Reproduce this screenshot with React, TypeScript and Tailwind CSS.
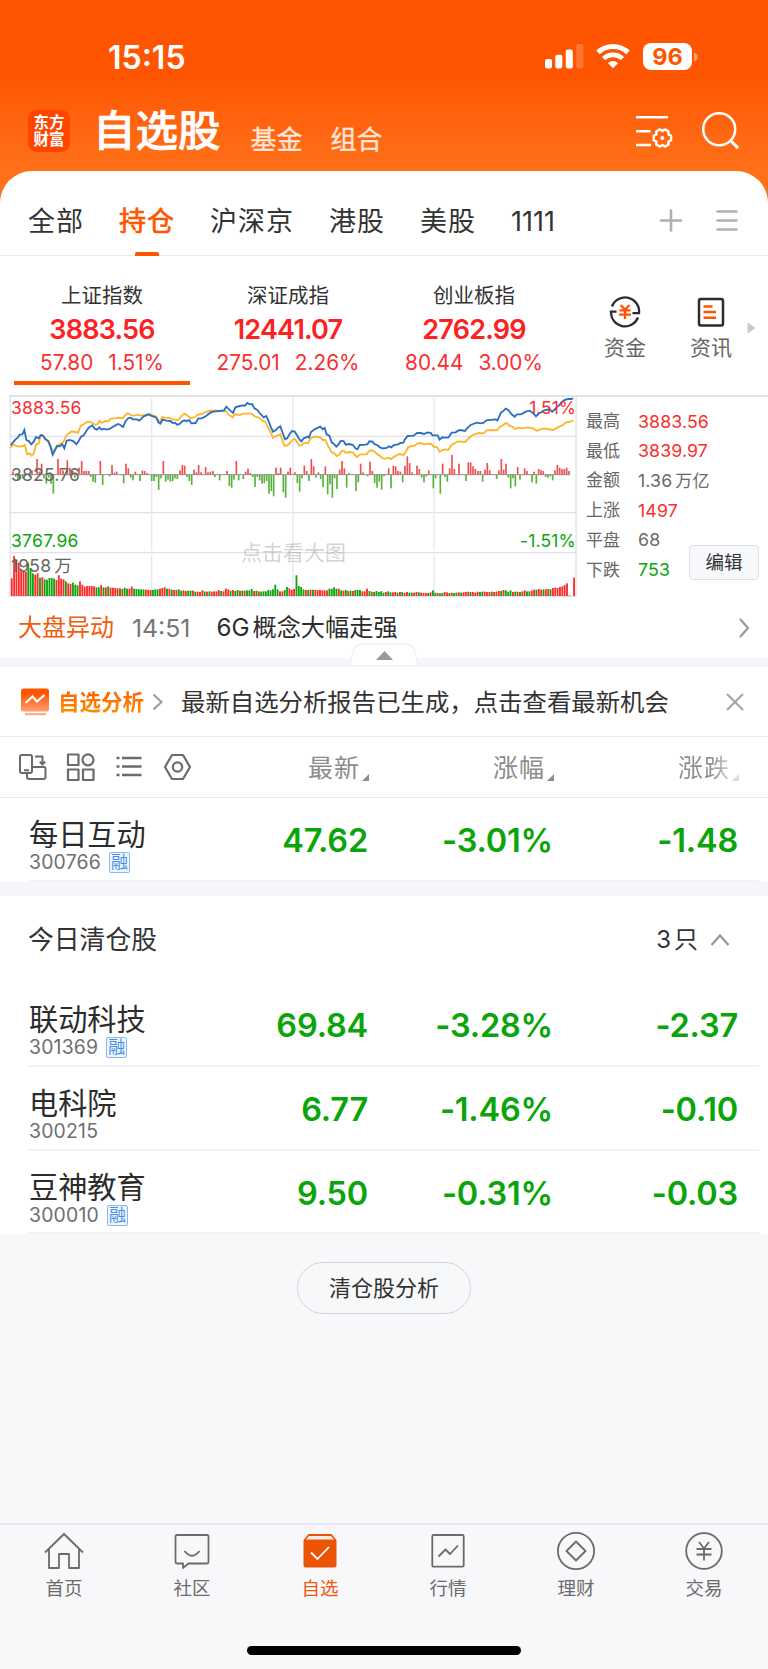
import type { ReactNode } from 'react';

const tabs = ['全部', '持仓', '沪深京', '港股', '美股', '1111'];

const indices = [
  { name: '上证指数', value: '3883.56', change: '57.80', percent: '1.51%' },
  { name: '深证成指', value: '12441.07', change: '275.01', percent: '2.26%' },
  { name: '创业板指', value: '2762.99', change: '80.44', percent: '3.00%' },
];

const stats = [
  { label: '最高', value: '3883.56', color: 'text-[#f92f2f]' },
  { label: '最低', value: '3839.97', color: 'text-[#f92f2f]' },
  { label: '金额', value: '1.36', unit: '万亿', color: 'text-[#6a6a6a]' },
  { label: '上涨', value: '1497', color: 'text-[#f92f2f]' },
  { label: '平盘', value: '68', color: 'text-[#6a6a6a]' },
  { label: '下跌', value: '753', color: 'text-[#0da50d]' },
];

type Stock = { name: string; code: string; margin: boolean; price: string; percent: string; change: string };

const holdings: Stock[] = [
  { name: '每日互动', code: '300766', margin: true, price: '47.62', percent: '-3.01%', change: '-1.48' },
];

const cleared: Stock[] = [
  { name: '联动科技', code: '301369', margin: true, price: '69.84', percent: '-3.28%', change: '-2.37' },
  { name: '电科院', code: '300215', margin: false, price: '6.77', percent: '-1.46%', change: '-0.10' },
  { name: '豆神教育', code: '300010', margin: true, price: '9.50', percent: '-0.31%', change: '-0.03' },
];

// Chart units are a third of a pixel.
const priceLine =
  '33,180 40,172 47,164 54,158 60,149 68,148 74,135 80,165 88,169 95,178 102,171 109,156 117,160 123,150 130,152 137,162 145,168 152,184 159,209 166,195 172,183 180,184 188,178 194,190 201,167 210,165 222,169 230,178 237,168 244,155 251,152 260,138 267,128 278,121 285,131 292,134 299,127 306,134 313,131 320,134 330,132 342,124 355,117 362,120 370,126 378,108 386,99 393,98 400,103 412,103 419,107 432,94 447,88 454,92 470,98 476,112 482,116 489,104 500,107 512,108 519,114 526,113 532,119 540,117 547,109 555,106 561,109 568,105 575,115 588,114 596,100 607,100 618,94 632,83 645,79 660,78 673,76 680,65 688,73 700,84 707,67 720,63 730,61 736,62 743,54 750,58 757,57 764,70 772,74 780,84 792,97 800,93 806,107 814,127 820,140 828,136 835,128 842,124 848,141 856,163 863,159 870,147 877,138 885,140 892,151 900,164 905,169 912,160 925,155 928,158 934,141 943,134 955,128 962,125 969,133 975,129 981,148 989,152 996,172 1004,178 1010,185 1018,177 1022,169 1027,167 1032,169 1038,179 1048,177 1060,180 1067,190 1073,193 1080,180 1095,179 1103,178 1109,169 1119,170 1124,177 1132,180 1141,187 1148,190 1160,189 1168,184 1175,187 1182,180 1196,178 1202,174 1211,173 1216,163 1224,153 1242,152 1252,144 1263,144 1273,147 1283,142 1294,144 1298,151 1314,151 1320,164 1327,157 1346,158 1356,143 1368,142 1375,137 1382,135 1396,138 1404,128 1413,120 1431,113 1443,115 1452,113 1460,106 1488,103 1493,107 1504,83 1512,77 1518,71 1526,75 1535,87 1545,95 1552,88 1565,88 1578,80 1590,77 1601,85 1609,94 1616,87 1625,82 1633,76 1650,73 1658,80 1668,70 1678,61 1685,53 1694,45 1705,42 1714,42 1721,40';

const averageLine =
  '33,188 40,178 47,182 58,185 70,183 76,180 82,208 90,205 96,212 103,205 109,178 117,176 123,153 130,153 139,164 147,167 154,185 160,202 166,195 172,182 190,172 201,150 210,143 216,139 225,141 235,143 243,123 252,118 264,110 275,112 286,119 293,118 300,108 306,114 318,108 325,109 334,101 345,100 356,98 362,99 370,100 378,89 385,85 395,91 404,92 413,89 419,91 434,91 447,87 460,92 469,94 476,106 482,108 488,95 494,98 510,99 518,103 535,105 547,92 554,86 562,91 574,100 586,96 595,89 606,87 614,83 628,78 644,76 660,78 680,79 687,89 699,97 706,88 720,90 732,86 756,86 765,94 780,99 788,108 796,110 808,132 813,142 820,158 828,154 842,148 849,170 855,183 863,181 870,174 877,166 884,161 892,170 898,181 905,181 912,174 920,173 925,175 931,162 940,156 951,155 962,158 970,165 977,165 985,182 996,202 1005,206 1011,213 1020,208 1026,198 1032,197 1038,204 1048,201 1060,202 1066,211 1073,216 1080,209 1090,208 1101,208 1108,198 1116,196 1125,200 1132,207 1141,213 1149,220 1158,221 1168,218 1173,223 1182,216 1191,211 1199,207 1212,210 1219,199 1226,187 1236,183 1245,182 1254,175 1262,174 1275,178 1285,176 1294,177 1303,185 1312,187 1320,200 1328,195 1336,193 1346,195 1356,179 1363,176 1374,169 1396,171 1405,162 1414,153 1424,148 1438,144 1452,145 1461,136 1480,135 1492,136 1501,125 1510,121 1516,115 1524,116 1530,123 1540,126 1546,132 1556,128 1570,130 1582,127 1592,129 1602,131 1611,137 1620,134 1633,130 1642,132 1660,135 1668,131 1680,124 1690,120 1700,112 1712,110 1721,107';

// Positive heights are drawn in red above the zero line, negative in green below it.
const deltas: [number, number][] = [
  [40, 8], [48, -5], [55, -12], [62, -12], [69, -10], [90, -6], [97, 12], [112, 46], [119, 8], [126, 32], [133, -10], [140, -26], [147, -8], [154, -26], [161, -56], [175, 46], [182, 18], [190, 12], [203, 42], [211, 20], [219, 10], [226, -8], [238, 20], [246, 40], [253, 10], [260, 10], [267, 10], [273, -6], [280, -20], [287, -23], [302, 40], [309, -30], [330, -4], [337, 28], [344, 5], [351, 8], [372, -25], [379, 32], [386, 18], [393, -8], [400, -16], [407, 8], [421, -18], [428, 11], [435, 10], [442, 4], [456, -18], [463, -18], [470, -6], [477, -45], [484, -10], [491, 40], [498, -20], [505, -14], [512, -20], [519, -18], [526, -10], [533, -12], [541, 12], [548, 28], [555, 26], [562, -6], [569, -18], [576, -30], [583, 14], [590, 6], [597, 28], [604, 6], [618, 22], [625, 6], [632, 8], [640, 10], [646, -6], [660, -16], [682, 10], [689, -33], [696, -38], [703, -14], [710, 40], [717, -16], [731, -12], [738, 8], [745, 17], [752, 4], [759, -6], [766, -36], [773, -6], [780, -16], [787, -26], [794, -24], [801, -18], [808, -56], [815, -48], [822, -64], [829, 20], [836, 4], [843, 20], [851, -52], [858, -68], [865, 8], [872, 20], [886, 6], [893, -24], [900, -50], [907, -10], [914, 26], [921, 10], [928, -18], [935, 46], [942, 24], [949, -8], [956, 6], [963, -12], [970, -36], [977, 24], [984, -58], [991, -28], [998, -68], [1005, -10], [1012, -42], [1020, 14], [1027, 40], [1034, 18], [1041, -38], [1048, 4], [1069, -48], [1076, -22], [1083, 32], [1090, 6], [1104, -4], [1111, 38], [1118, 10], [1125, -24], [1132, -38], [1139, -20], [1146, -44], [1153, -4], [1167, 18], [1174, -40], [1181, 26], [1188, 24], [1195, 10], [1202, 8], [1209, -22], [1216, 26], [1223, 54], [1230, 34], [1237, 6], [1252, 26], [1259, 16], [1266, -8], [1273, -22], [1280, -4], [1287, 12], [1301, -40], [1308, -10], [1322, -56], [1329, 32], [1336, -6], [1343, -20], [1350, 18], [1357, 58], [1364, 16], [1378, 32], [1399, -18], [1406, 36], [1413, 36], [1420, 24], [1427, 16], [1435, 10], [1442, 10], [1449, -20], [1456, 14], [1463, 34], [1470, 12], [1491, -12], [1498, 12], [1505, 46], [1512, 14], [1519, 32], [1526, -8], [1533, -40], [1540, -10], [1547, -34], [1554, 22], [1561, -14], [1575, 18], [1582, 10], [1597, -22], [1603, 8], [1610, -26], [1617, 16], [1624, 12], [1631, 10], [1638, -6], [1645, -8], [1652, -4], [1659, -16], [1666, 12], [1673, 28], [1680, 20], [1687, 16], [1694, 16], [1701, 20], [1708, 10],
];

const volumes = (
  'r53 r120 r108 r100 r80 r76 r72 g100 g84 g68 r64 r68 g55 r56 g50 g49 g54 g54 g52 r48 r62 r52 r50 g44 r38 r36 g40 g34 g32 r44 r34 r28 r30 r30 r30 r29 g26 g26 r33 g26 r26 g29 r25 r25 r24 r23 g23 r21 g25 g22 r22 r28 g22 g21 g20 g20 g20 r19 r18 r18 ' +
  'g18 g20 g20 r22 r24 r26 g22 r22 g19 r18 r18 g20 g16 r17 r15 g16 g16 r16 g13 r13 r12 r17 g14 r13 g14 r13 r14 r14 r18 g15 r14 r22 r20 g16 r18 g15 g18 r16 g16 r16 g17 g17 g21 r15 g16 r14 g13 g14 g14 g18 g17 g20 g34 g20 r14 r14 g18 g27 r23 r18 ' +
  'r21 g62 g30 g27 g20 r18 g18 r19 g19 r18 r18 r18 r17 r17 r17 g22 g22 g26 g22 r22 g17 r16 g18 r15 g16 r15 g18 g18 g18 r14 r14 r22 g15 r13 g12 g15 g12 g14 g10 r12 g14 g11 r11 r12 g10 r12 g12 r9 r12 g10 g10 r10 r12 g11 r10 r9 r9 g9 r11 g17 ' +
  'g10 r9 g8 g9 r12 r11 g9 r10 g9 g10 r11 g10 r11 r12 r13 g12 r12 r10 r13 g12 g13 r13 r12 r12 g13 r12 r13 r15 g15 r18 g17 g13 g17 r12 g13 r13 g12 r14 r17 g14 g14 r16 r19 g19 r21 r19 g20 r20 r21 g20 r24 r25 r24 r27 r29 r33 r38 r2 r0 r55'
)
  .split(' ')
  .map((v) => ({ up: v[0] === 'r', height: Number(v.slice(1)) }));

// Spread the bars evenly so that the last one ends at the chart's right edge.
const volumeStep = (1720.5 - 33.5) / (volumes.length - 1);

function Icon({ size, stroke = '#6b6b6b', width = 2, children }: { size: number; stroke?: string; width?: number; children: ReactNode }) {
  return (
    <svg width={size} height={size} viewBox={`0 0 ${size} ${size}`} fill="none" stroke={stroke} strokeWidth={width} strokeLinejoin="round" className="block shrink-0">
      {children}
    </svg>
  );
}

function StatusBar() {
  return (
    <div className="flex h-[96px] items-start pr-[69px] pl-[108px] pt-[40px] text-white">
      <span className="text-[32px] font-semibold leading-[35px]">15:15</span>
      <div className="ml-auto flex items-start">
        <svg width="39" height="34" viewBox="0 0 39 34" fill="#fff" className="mt-[1px]">
          <rect x="0" y="18" width="7" height="9.5" rx="2" />
          <rect x="10.3" y="13.7" width="7" height="13.8" rx="2" />
          <rect x="20.8" y="8.6" width="7" height="18.9" rx="2" />
          <rect x="31.3" y="3" width="7" height="24.5" rx="2" opacity="0.2" />
        </svg>
        <svg width="34" height="26" viewBox="0 0 34 26" className="mt-[3px] ml-[12px]" fill="none" stroke="#fff">
          <path d="M2 9.3a22 22 0 0 1 30 0" strokeWidth="5" />
          <path d="M7.6 15.6a13.6 13.6 0 0 1 18.8 0" strokeWidth="4.6" />
          <path d="M12 20.2a7 7 0 0 1 10 0L17 25.2z" fill="#fff" stroke="none" />
        </svg>
        <div className="mt-[3px] ml-[13px] flex h-[27px] w-[49px] items-center justify-center rounded-[8px] bg-white text-[23.5px] font-bold leading-none text-[#ff5500]">96</div>
        <svg width="6" height="10" viewBox="0 0 6 10" className="mt-[12px] ml-[1px]">
          <path d="M1 0.5c5 1 5 8 0 9z" fill="#fff" opacity="0.4" />
        </svg>
      </div>
    </div>
  );
}

function Header() {
  return (
    <div className="flex h-[75px] items-start pl-[28px] text-white">
      <div className="mt-[14px] flex h-[42px] w-[42px] flex-col items-center justify-center rounded-[9px] bg-[#ff4400] text-[15.5px] font-bold leading-[17px]">
        <span>东方</span>
        <span>财富</span>
      </div>
      <span className="mt-[10px] ml-[23px] text-[42.5px] font-medium leading-[50px] [-webkit-text-stroke:0.7px]">自选股</span>
      <span className="mt-[26px] ml-[30px] text-[26px] leading-[36px] text-white/80 [-webkit-text-stroke:0.3px]">基金</span>
      <span className="mt-[26px] ml-[28px] text-[26px] leading-[36px] text-white/80 [-webkit-text-stroke:0.3px]">组合</span>
      <svg width="38" height="36" viewBox="0 0 38 36" className="mt-[18px] ml-[253px]" fill="none" stroke="#fff" strokeWidth="2.6">
        <path d="M0 3.2h32M0 17.2h14.5M0 31h15" />
        <path
          transform="translate(26.4 24)"
          d="M8.7-2.2L8.7 2.2 6.1 3.5 6.2 6.5 2.5 8.6 0 7-2.5 8.6-6.2 6.5-6.1 3.5-8.7 2.2-8.7-2.2-6.1-3.5-6.2-6.5-2.5-8.6 0-7 2.5-8.6 6.2-6.5 6.1-3.5z"
          strokeWidth="2.4"
          strokeLinejoin="round"
        />
        <circle cx="26.4" cy="24" r="2" fill="#fff" stroke="none" />
      </svg>
      <svg width="40" height="40" viewBox="0 0 40 40" className="mt-[15px] ml-[27px]" fill="none" stroke="#fff" strokeWidth="2.5">
        <circle cx="18.2" cy="18.2" r="16" />
        <path d="M29.5 29.5l7.6 7.6" strokeWidth="3" />
      </svg>
    </div>
  );
}

function Tabs() {
  return (
    <div className="flex h-[85px] items-start border-b border-[#ebebed] pl-[28px] text-[27px] text-[#333]">
      {tabs.map((tab) => (
        <div key={tab} className={`mr-[35px] flex h-[85px] shrink-0 flex-col items-center ${tab === '1111' ? '' : 'tracking-[1px]'} ${tab === '持仓' ? 'text-[#ff5500] [-webkit-text-stroke:0.7px]' : ''}`}>
          <span className="mt-[31px] leading-[40px]">{tab}</span>
          {tab === '持仓' && <span className="mt-auto h-[4px] w-[24px] rounded-t-[2px] bg-[#ff5500]" />}
        </div>
      ))}
      <svg width="80" height="24" viewBox="0 0 80 24" className="mt-[38px] mr-[29px] ml-auto shrink-0" fill="none" stroke="#b0b0b0" strokeWidth="2.6" strokeLinecap="round">
        <path d="M2 11.5h20M12 1.5v20" />
        <path d="M58.5 2.5h19M58.5 11.5h19M58.5 20.5h19" />
      </svg>
    </div>
  );
}

function IndexStrip() {
  return (
    <div className="flex h-[139px] pl-[9px] pt-[26px]">
      {indices.map((index, i) => (
        <div key={index.name} className="flex w-[186px] flex-col items-center">
          <span className="text-[20.5px] leading-[28px] text-[#333]">{index.name}</span>
          <span className="mt-[3px] text-[27px] font-semibold leading-[34px] tracking-[-0.8px] text-[#fb2222]">{index.value}</span>
          <span className="mt-[2px] text-[20.8px] leading-[28px] text-[#f92f2f]">
            {index.change}
            <span className="ml-[15px]">{index.percent}</span>
          </span>
          {i === 0 && <span className="mt-[4px] h-[4px] w-[176px] bg-[#ff5500]" />}
        </div>
      ))}
      <div className="ml-[37px] flex w-[42px] flex-col items-center text-[21px] text-[#666]">
        <svg width="32" height="32" viewBox="0 0 32 32" className="mt-[14px] block shrink-0" fill="none" stroke="#2c2c2c" strokeWidth="2.3">
          <path d="M3 10.5A14 14 0 0 1 30 17.2h-6.5M29 21.5A14 14 0 0 1 2 15.6h5.5" />
          <path d="M11.5 9l4.5 4.5L20.5 9M10.5 14.3h11M10 18.7h12M16 13.5V23" stroke="#ff5500" />
        </svg>
        <span className="mt-[5px] leading-[30px]">资金</span>
      </div>
      <div className="ml-[43px] flex w-[44px] flex-col items-center text-[21px] text-[#666]">
        <svg width="32" height="32" viewBox="0 0 32 32" className="mt-[14px] block shrink-0" fill="none" stroke="#2c2c2c" strokeWidth="2.5">
          <rect x="4" y="3" width="24" height="26.5" rx="2" />
          <path d="M8.5 10.5h9M8.5 16h12.5M8.5 21.7h12.5" stroke="#ff5500" strokeWidth="2.6" />
        </svg>
        <span className="mt-[5px] leading-[30px]">资讯</span>
      </div>
      <svg width="9" height="12" viewBox="0 0 9 12" className="mt-[40px] ml-[14px]" fill="#c9c9c9">
        <path d="M0.5 0.5v11l8-5.5z" />
      </svg>
    </div>
  );
}

function MarketChart() {
  return (
    <div className="relative h-[200px] w-[568px] shrink-0 text-[17.5px]">
      <svg width="568" height="200" viewBox="28 36 1704 600" fill="none" className="block">
        <path d="M32 36V634M1729 36V634M28 154H1731M28 383H1731M28 503H1731M28 634H1731" stroke="#e0e2ea" strokeWidth="4" />
        <path d="M456 39V497M456 509V634M880 39V497M880 509V634M1303 39V497M1303 509V634" stroke="#e6e8f1" strokeWidth="4" />
        <path d="M33 269H1712" stroke="#8c8c8c" strokeWidth="3" />
        {deltas.map(([x, h]) => (
          <rect key={x} x={x - 2.5} y={h > 0 ? 268 - h : 270} width="5" height={Math.abs(h)} fill={h > 0 ? '#ee5050' : '#58b23d'} />
        ))}
        {volumes.map((v, i) => (
          <rect key={i} x={33.5 + i * volumeStep} y={633 - v.height} width="5.5" height={v.height} fill={v.up ? '#fb2c2c' : '#0da50d'} />
        ))}
        <polyline points={averageLine} stroke="#fdb52c" strokeWidth="5.5" />
        <polyline points={priceLine} stroke="#2b6fc2" strokeWidth="5.5" />
      </svg>
      <span className="absolute top-0 left-[2px] leading-[22px] tracking-[0.2px] text-[#f92f2f]">3883.56</span>
      <span className="absolute top-0 right-[1px] leading-[22px] text-[#f92f2f]">1.51%</span>
      <span className="absolute top-[67px] left-[2px] leading-[22px] tracking-[0.2px] text-[#666]">3825.76</span>
      <span className="absolute top-[133px] left-[2px] leading-[22px] tracking-[0.3px] text-[#0da50d]">3767.96</span>
      <span className="absolute top-[133px] right-[1px] leading-[22px] tracking-[0.2px] text-[#0da50d]">-1.51%</span>
      <span className="absolute top-[158px] left-[2px] leading-[22px] tracking-[0.2px] text-[#666]">
        1958<span className="ml-[3px]">万</span>
      </span>
      <span className="absolute top-[142px] left-[232px] text-[21px] leading-[28px] text-[#8c8c8c]/40">点击看大图</span>
    </div>
  );
}

function MarketStats() {
  return (
    <div className="flex flex-1 pt-[10px] pl-[9px] text-[17px]">
      <div className="flex w-[103px] flex-col whitespace-nowrap">
        {stats.map((s) => (
          <div key={s.label} className="flex h-[29.7px] items-center">
            <span className="w-[52px] shrink-0">
              <span className="text-[#666]">{s.label}</span>
            </span>
            <span className={`text-[17.8px] tracking-[0.1px] ${s.color}`}>
              {s.value}
              {s.unit && <span className="ml-[3px] text-[17px]">{s.unit}</span>}
            </span>
          </div>
        ))}
      </div>
      <button className="mt-[138px] h-[35px] w-[70px] shrink-0 rounded-[4px] border border-[#dcdfe6] bg-[#f7f8fb] text-[18.5px] leading-none text-[#333]">编辑</button>
    </div>
  );
}

function NewsRow() {
  return (
    <div className="relative h-[70px] border-b-[9px] border-[#f5f6f9]">
      <div className="flex items-center pt-[11px] pl-[18px] text-[24px] leading-[40px]">
        <span className="text-[#f25a0c]">大盘异动</span>
        <span className="ml-[18px] text-[24.8px] text-[#777]">14:51</span>
        <span className="ml-[26px] text-[24.2px] text-[#2c2c2c]">
          6G<span className="ml-[3px]">概念大幅走强</span>
        </span>
        <svg width="12" height="22" viewBox="0 0 12 22" className="mr-[18px] ml-auto" fill="none" stroke="#999" strokeWidth="2.2">
          <path d="M2 2l8 9-8 9" />
        </svg>
      </div>
      <svg width="70" height="24" viewBox="0 0 70 24" className="absolute top-[46px] left-[349px]">
        <path d="M1 22.5C4 12 2 1 14 1H56C68 1 66 12 69 22.5z" fill="#fff" stroke="#f0f1f4" strokeWidth="1.5" />
        <path d="M27 17l8.5-9 8.5 9z" fill="#999" />
      </svg>
    </div>
  );
}

function AnalysisBanner() {
  return (
    <div className="flex h-[70px] items-center border-b border-[#ebebed] pl-[21px]">
      <svg width="28" height="28" viewBox="0 0 28 28" className="shrink-0" fill="none">
        <defs>
          <linearGradient id="report" x1="0" y1="0" x2="0" y2="1">
            <stop offset="0.2" stopColor="#ff5500" />
            <stop offset="1" stopColor="#ff9e73" />
          </linearGradient>
        </defs>
        <rect x="0" y="0.5" width="28" height="23" rx="2.5" fill="url(#report)" />
        <path d="M4.5 15l7-6.5 4.5 5L23.5 7" stroke="#fff" strokeWidth="2" />
        <path d="M4 26.2h21" stroke="#ffa27c" strokeWidth="2" />
      </svg>
      <span className="ml-[9px] bg-gradient-to-b from-[#ff5500] to-[#ff9500] bg-clip-text text-[21.5px] font-bold leading-[32px] text-transparent">自选分析</span>
      <svg width="12" height="20" viewBox="0 0 12 20" className="ml-[8px]" fill="none" stroke="#999" strokeWidth="2">
        <path d="M1.5 2.5l8 7.5-8 7.5" />
      </svg>
      <span className="ml-[17px] text-[24.4px] leading-[36px] whitespace-nowrap text-[#333]">最新自选分析报告已生成，点击查看最新机会</span>
      <svg width="18" height="18" viewBox="0 0 18 18" className="mr-[24px] ml-auto shrink-0" stroke="#a6a6a6" strokeWidth="2.2">
        <path d="M1 1l16 16M17 1L1 17" />
      </svg>
    </div>
  );
}

function SortMark({ color = '#8c8c8c' }: { color?: string }) {
  return (
    <svg width="7" height="7" viewBox="0 0 7 7" className="mb-[7px] ml-[2px] self-end" fill={color}>
      <path d="M7 0v7H0z" />
    </svg>
  );
}

function ListToolbar() {
  return (
    <div className="flex h-[61px] items-center border-b border-[#ebebed] pl-[18px] text-[25px] text-[#8c8c8c]">
      <div className="flex w-[174px] justify-between">
        <Icon size={29}>
          <path d="M8.5 20H4a2 2 0 0 1-2-2V4a2 2 0 0 1 2-2h8a2 2 0 0 1 2 2v14a2 2 0 0 1-2 2zM6 17.2h5M17 3.5h7.5V11M21.8 8.8l2.7 2.7 2.7-2.7M9 20v4a2 2 0 0 0 2 2h14.5a2 2 0 0 0 2-2v-8.5a1.5 1.5 0 0 0-1.5-1.5H14" />
        </Icon>
        <Icon size={29} width={2.2}>
          <rect x="2" y="1.5" width="10.5" height="10.5" />
          <circle cx="22" cy="6.8" r="5.5" />
          <rect x="2" y="16.5" width="10.5" height="10.5" />
          <rect x="17" y="16.5" width="10.5" height="10.5" />
        </Icon>
        <Icon size={29} width={2.6}>
          <path d="M7 5h19.5M7 13.5h19.5M7 22h19.5M1.5 5h3M1.5 13.5h3M1.5 22h3" />
        </Icon>
        <Icon size={29} width={2.2}>
          <path d="M9 2h11l7 12-7 12H9L2 14z" />
          <circle cx="14.5" cy="14" r="4.7" />
        </Icon>
      </div>
      <div className="flex w-[177px] justify-end pt-[1px] leading-[40px] tracking-[1px]">
        最新
        <SortMark />
      </div>
      <div className="flex w-[185px] justify-end pt-[1px] leading-[40px] tracking-[1px]">
        涨幅
        <SortMark />
      </div>
      <div className="flex w-[185px] justify-end pt-[1px] leading-[40px] tracking-[1px]">
        <span className="bg-gradient-to-r from-[#8c8c8c] from-60% to-[#d0d0d0] bg-clip-text text-transparent">涨跌</span>
        <SortMark color="#dcdcdc" />
      </div>
    </div>
  );
}

function StockRow({ stock }: { stock: Stock }) {
  return (
    <div className="mr-[9px] ml-[29px] flex h-[83.7px] border-b-2 border-[#f2f2f4]">
      <div className="w-[155px] pt-[19px]">
        <p className="text-[29.2px] leading-[35px] text-[#2c2c2c]">{stock.name}</p>
        <div className="flex items-center text-[19.4px] leading-[21px] tracking-[0.2px] text-[#6f6f6f]">
          {stock.code}
          {stock.margin && (
            <span className="ml-[8px] flex h-[21px] w-[21px] items-center justify-center rounded-[2px] border border-[#8ab8f0] bg-[#eef5fe] text-[17px] leading-none tracking-normal text-[#4a90e2]">融</span>
          )}
        </div>
      </div>
      <div className="flex pt-[23px] text-right text-[32.5px] font-semibold leading-[40px] tracking-[-0.2px] text-[#0aa50a]">
        <span className="w-[184px]">{stock.price}</span>
        <span className="w-[185px]">{stock.percent}</span>
        <span className="w-[185px]">{stock.change}</span>
      </div>
    </div>
  );
}

function ClearedHeader() {
  return (
    <div className="flex h-[87.5px] items-center pt-[2px] pr-[38px] pl-[28px] text-[25.8px] text-[#333]">
      <span>今日清仓股</span>
      <span className="ml-auto text-[24px]">
        3<span className="ml-[3px]">只</span>
      </span>
      <svg width="20" height="14" viewBox="0 0 20 14" className="ml-[12px]" fill="none" stroke="#999" strokeWidth="2.4">
        <path d="M1.5 12L10 2.5l8.5 9.5" />
      </svg>
    </div>
  );
}

const navItems: { label: string; active?: boolean; icon: ReactNode }[] = [
  {
    label: '首页',
    icon: <path d="M1 20.5L20 2l19 18.5M5 17v19h10V22h10v14h10V17" />,
  },
  {
    label: '社区',
    icon: <path d="M5 3h30a1.5 1.5 0 0 1 1.5 1.5V30A1.5 1.5 0 0 1 35 31.5H16.5L11 36v-4.5H5A1.5 1.5 0 0 1 3.5 30V4.5A1.5 1.5 0 0 1 5 3zM12.5 19q7.5 9.5 15 0" />,
  },
  {
    label: '自选',
    active: true,
    icon: (
      <>
        <path d="M8.5 2h23l5 6v25a2.5 2.5 0 0 1-2.5 2.5H6A2.5 2.5 0 0 1 3.5 33V8z" fill="#eb5405" stroke="none" />
        <path d="M9 4h22l3 3.5H6z" fill="#fbeee7" stroke="none" />
        <path d="M11 20.5l6.5 6.5L29 15" stroke="#fff" />
      </>
    ),
  },
  {
    label: '行情',
    icon: <path d="M5.5 3h29A1.2 1.2 0 0 1 35.700 4.2v29.3a1.2 1.2 0 0 1-1.2 1.2h-29a1.2 1.2 0 0 1-1.2-1.2V4.2A1.2 1.2 0 0 1 5.5 3zM10.5 24.5l7-7 4.5 4.5 8-8.5" />,
  },
  {
    label: '理财',
    icon: (
      <>
        <circle cx="20" cy="19" r="18.1" />
        <path d="M20 9.5l9.5 9.5-9.5 9.5-9.5-9.5z" />
      </>
    ),
  },
  {
    label: '交易',
    icon: (
      <>
        <circle cx="20" cy="19" r="17.8" />
        <path d="M15 10l5 6.5 5-6.5M12.5 17h15M12.5 22.5h15M20 16.5v12" />
      </>
    ),
  },
];

function BottomNav() {
  return (
    <nav className="mt-auto h-[146px] border-t-2 border-[#e9eaef] bg-[#f8f8fb]">
      <div className="flex">
        {navItems.map((item) => (
          <div key={item.label} className={`flex w-[128px] flex-col items-center pt-[7px] text-[18.5px] leading-[26px] ${item.active ? 'text-[#f05a0c]' : 'text-[#6b6b6b]'}`}>
            <Icon size={40} width={1.8}>{item.icon}</Icon>
            <span className="mt-[3px]">{item.label}</span>
          </div>
        ))}
      </div>
      <div className="mx-auto mt-[45px] h-[9px] w-[274px] rounded-full bg-black" />
    </nav>
  );
}

export default function App() {
  return (
    <div className="flex h-[1669px] w-[768px] flex-col overflow-hidden bg-[#f7f8fa] font-['Inter','Noto_Sans_CJK_SC',sans-serif]">
      <div className="h-[210px] shrink-0 bg-gradient-to-b from-[#ff5500] from-35% to-[#ff7019] to-80%">
        <StatusBar />
        <Header />
      </div>
      <div className="-mt-[39px] shrink-0 rounded-t-[32px] bg-white">
        <Tabs />
        <IndexStrip />
        <div className="ml-[9px] flex border-t-2 border-[#e0e2ea]">
          <MarketChart />
          <MarketStats />
        </div>
        <NewsRow />
        <AnalysisBanner />
        <ListToolbar />
        {holdings.map((s) => (
          <StockRow key={s.code} stock={s} />
        ))}
        <div className="h-[14px] bg-[#f5f6f9]" />
        <ClearedHeader />
        {cleared.map((s) => (
          <StockRow key={s.code} stock={s} />
        ))}
      </div>
      <button className="mx-auto mt-[28px] h-[52px] w-[174px] shrink-0 rounded-full border border-[#d3d4d8] text-[22px] text-[#333]">清仓股分析</button>
      <BottomNav />
    </div>
  );
}
